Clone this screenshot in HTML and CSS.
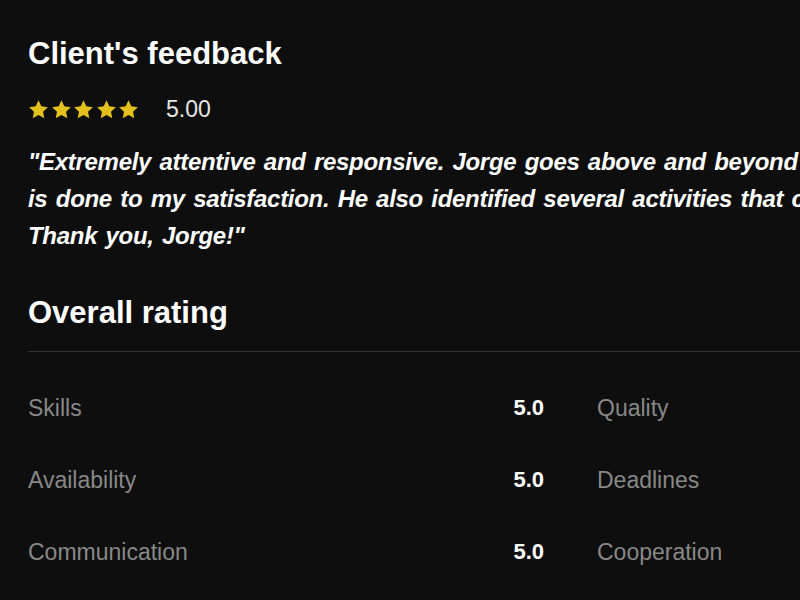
FILE: index.html
```html
<!DOCTYPE html>
<html lang="en">
<head>
    <meta charset="UTF-8">
    <meta name="viewport" content="width=device-width, initial-scale=1.0">
    <title>Client's feedback</title>
    <link rel="stylesheet" href="styles.css">
</head>
<body>
    <div class="review">
        <h2>Client's feedback</h2>

        <div class="score">
            <div class="stars">
                <svg viewBox="0 0 24 24"><path d="M12 1.5l3.2 6.9 7.5.9-5.5 5.2 1.4 7.5L12 18.3l-6.6 3.7 1.4-7.5-5.5-5.2 7.5-.9z"/></svg>
                <svg viewBox="0 0 24 24"><path d="M12 1.5l3.2 6.9 7.5.9-5.5 5.2 1.4 7.5L12 18.3l-6.6 3.7 1.4-7.5-5.5-5.2 7.5-.9z"/></svg>
                <svg viewBox="0 0 24 24"><path d="M12 1.5l3.2 6.9 7.5.9-5.5 5.2 1.4 7.5L12 18.3l-6.6 3.7 1.4-7.5-5.5-5.2 7.5-.9z"/></svg>
                <svg viewBox="0 0 24 24"><path d="M12 1.5l3.2 6.9 7.5.9-5.5 5.2 1.4 7.5L12 18.3l-6.6 3.7 1.4-7.5-5.5-5.2 7.5-.9z"/></svg>
                <svg viewBox="0 0 24 24"><path d="M12 1.5l3.2 6.9 7.5.9-5.5 5.2 1.4 7.5L12 18.3l-6.6 3.7 1.4-7.5-5.5-5.2 7.5-.9z"/></svg>
            </div>
            <span class="score-value">5.00</span>
        </div>

        <p class="quote">"Extremely attentive and responsive. Jorge goes above and beyond to make sure every task<br>
            is done to my satisfaction. He also identified several activities that could be automated.<br>
            Thank you, Jorge!"</p>

        <h2 class="overall-title">Overall rating</h2>

        <div class="ratings">
            <div class="rating"><span class="label">Skills</span><span class="value">5.0</span></div>
            <div class="rating"><span class="label">Quality</span><span class="value">5.0</span></div>
            <div class="rating"><span class="label">Availability</span><span class="value">5.0</span></div>
            <div class="rating"><span class="label">Deadlines</span><span class="value">5.0</span></div>
            <div class="rating"><span class="label">Communication</span><span class="value">5.0</span></div>
            <div class="rating"><span class="label">Cooperation</span><span class="value">5.0</span></div>
        </div>
    </div>
</body>
</html>
```

FILE: styles.css
```css
body {
    margin: 0;
    background: #0e0e0e;
    color: #fff;
    font-family: "Liberation Sans", Arial, sans-serif;
    overflow: hidden;
}
.review {
    width: 1085px;
    padding: 34px 28px 0;
}
h2 {
    font-size: 31px;
    font-weight: 700;
    margin: 0;
    line-height: 40px;
}
.score {
    display: flex;
    align-items: center;
    gap: 27px;
    height: 24px;
    margin-top: 23px;
}
.stars {
    display: flex;
    gap: 1.5px;
}
.stars svg {
    width: 21px;
    height: 21px;
    fill: #e3c01c;
}
.score-value {
    font-size: 23px;
    color: #e6e6e6;
}
.quote {
    font-size: 24px;
    font-style: italic;
    font-weight: 700;
    letter-spacing: -0.3px;
    word-spacing: 2px;
    line-height: 37px;
    white-space: nowrap;
    margin: 22px 0 0;
}
.overall-title {
    margin-top: 39px;
    padding-bottom: 18px;
    border-bottom: 1px solid #343434;
}
.ratings {
    display: grid;
    grid-template-columns: 516px 516px;
    column-gap: 53px;
    padding-top: 20px;
}
.rating {
    display: flex;
    justify-content: space-between;
    align-items: center;
    height: 72px;
    font-size: 23px;
}
.label {
    color: #888;
}
.value {
    font-weight: 700;
    font-size: 22px;
}
```
